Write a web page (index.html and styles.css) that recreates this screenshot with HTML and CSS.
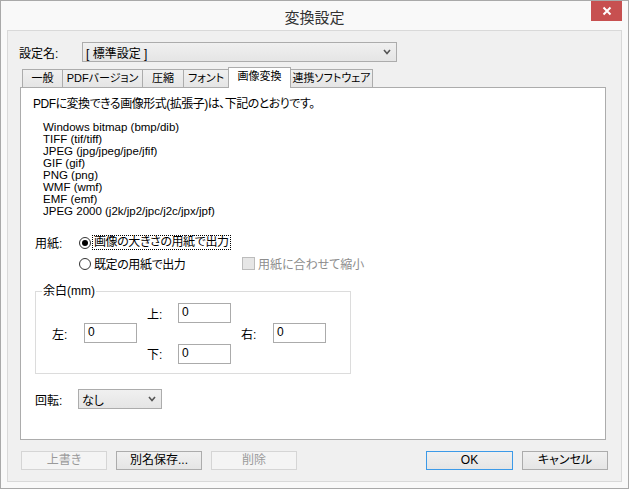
FILE: index.html
```html
<!DOCTYPE html>
<html lang="ja">
<head>
<meta charset="utf-8">
<title>変換設定</title>
<link rel="stylesheet" href="styles.css">
</head>
<body>
<div class="window">
  <div class="titlebar">
    <div></div>
    <div class="title">変換設定</div>
    <div class="tb-right">
      <div class="close"><svg width="10" height="10" viewBox="0 0 10 10"><path d="M1.5 1.5 L8.5 8.5 M8.5 1.5 L1.5 8.5" stroke="#fff" stroke-width="2" fill="none"/></svg></div>
    </div>
  </div>
  <div class="panel">
    <div class="name-row">
      <span class="name-lbl">設定名:</span>
      <div class="select select-wide">
        <span>[ 標準設定 ]</span>
        <svg class="chev" width="8" height="6" viewBox="0 0 8 6"><path d="M1 1 L4 4.5 L7 1" stroke="#555" stroke-width="1.6" fill="none"/></svg>
      </div>
    </div>
    <div class="tabs">
      <div class="tab">一般</div>
      <div class="tab">PDFバージョン</div>
      <div class="tab">圧縮</div>
      <div class="tab">フォント</div>
      <div class="tab active">画像変換</div>
      <div class="tab">連携ソフトウェア</div>
    </div>
    <div class="tabpanel">
      <p class="intro">PDFに変換できる画像形式(拡張子)は、下記のとおりです。</p>
      <ul class="formats">
        <li>Windows bitmap (bmp/dib)</li>
        <li>TIFF (tif/tiff)</li>
        <li>JPEG (jpg/jpeg/jpe/jfif)</li>
        <li>GIF (gif)</li>
        <li>PNG (png)</li>
        <li>WMF (wmf)</li>
        <li>EMF (emf)</li>
        <li>JPEG 2000 (j2k/jp2/jpc/j2c/jpx/jpf)</li>
      </ul>
      <div class="paper">
        <span class="paper-lbl">用紙:</span>
        <div class="opt g2"><span class="radio"><span class="dot"></span></span><span class="focus">画像の大きさの用紙で出力</span></div>
        <div class="opt g2 row2"><span class="radio"></span><span class="opt-text">既定の用紙で出力</span></div>
        <div class="opt g3 row2 disabled"><span class="check"></span><span>用紙に合わせて縮小</span></div>
      </div>
      <fieldset class="margins">
        <legend>余白(mm)</legend>
        <div class="mgrid">
          <span class="ml c3 r1">上:</span><div class="field c4 r1">0</div>
          <span class="ml c1 r2">左:</span><div class="field c2 r2">0</div>
          <span class="ml c5 r2">右:</span><div class="field c6 r2">0</div>
          <span class="ml c3 r3">下:</span><div class="field c4 r3">0</div>
        </div>
      </fieldset>
      <div class="rotate">
        <span class="rot-lbl">回転:</span>
        <div class="select select-small">
          <span>なし</span>
          <svg class="chev" width="8" height="6" viewBox="0 0 8 6"><path d="M1 1 L4 4.5 L7 1" stroke="#555" stroke-width="1.6" fill="none"/></svg>
        </div>
      </div>
    </div>
    <div class="buttons">
      <div class="btn disabled">上書き</div>
      <div class="btn">別名保存...</div>
      <div class="btn disabled">削除</div>
      <div class="spacer"></div>
      <div class="btn default">OK</div>
      <div class="btn">キャンセル</div>
    </div>
  </div>
</div>
</body>
</html>
```
FILE: styles.css
```css
* { box-sizing: border-box; }
html, body { margin: 0; padding: 0; }
body {
  font-family: "Liberation Sans", "Noto Sans CJK JP", sans-serif;
  font-size: 12px;
  font-feature-settings: "palt";
  color: #000;
  background: #fff;
}
.window {
  width: 629px;
  height: 489px;
  border: 1px solid #a9a9a9;
  background: #f9f9f9;
  padding: 0 6px 6px 6px;
  display: flex;
  flex-direction: column;
}
.titlebar {
  height: 29px;
  display: grid;
  grid-template-columns: 1fr auto 1fr;
}
.title {
  font-family: "Noto Sans CJK JP", sans-serif;
  font-size: 15px;
  line-height: 29px;
  color: #333;
  padding-top: 1px;
}
.tb-right { display: flex; justify-content: flex-end; align-items: flex-start; }
.close {
  width: 31px;
  height: 20px;
  background: #c75050;
  display: flex;
  align-items: center;
  justify-content: center;
}
.panel {
  height: 452px;
  border: 1px solid #d9d9d9;
  background: #f0f0f0;
}
.name-row {
  margin: 11px 0 0 11px;
  display: flex;
  align-items: center;
  height: 20px;
}
.name-lbl { width: 63px; }
.select {
  height: 20px;
  border: 1px solid #acacac;
  background: linear-gradient(#f0f0f0, #e5e5e5);
  display: flex;
  align-items: center;
  justify-content: space-between;
  padding: 0 5px 0 3px;
}
.select-wide { width: 315px; }
.select-small { width: 84px; }
.chev { display: block; }
.tabs {
  margin: 5px 0 0 14px;
  height: 20px;
  display: grid;
  grid-template-columns: 41px 80px 41px 45px 62px 82px;
  align-items: end;
  position: relative;
  z-index: 1;
  font-size: 11px;
}
.tab {
  height: 18px;
  border: 1px solid #acacac;
  border-left-width: 0;
  border-bottom: none;
  background: linear-gradient(#f0f0f0, #e5e5e5);
  text-align: center;
  line-height: 17px;
  white-space: nowrap;
  overflow: hidden;
}
.tab:first-child { border-left-width: 1px; }
.tab.active {
  height: 21px;
  margin-bottom: -1px;
  background: #fff;
  border-left-width: 1px;
  margin-left: -1px;
  line-height: 17px;
}
.tabpanel {
  margin-left: 12px;
  width: 586px;
  height: 353px;
  border: 1px solid #acacac;
  background: #fff;
  padding: 9px 0 0 12px;
}
.intro { margin: 0; line-height: 14px; letter-spacing: -0.5px; }
.formats {
  list-style: none;
  margin: 10px 0 0 10px;
  padding: 0;
  font-size: 11.5px;
  line-height: 12px;
}
.paper {
  margin: 15px 0 0 2px;
  display: grid;
  grid-template-columns: 44px 163px auto;
  grid-auto-rows: 21px;
  align-items: center;
}
.g2 { grid-column: 2; }
.g3 { grid-column: 3; }
.row2 { grid-row: 2; }
.opt { display: flex; align-items: center; gap: 1px; white-space: nowrap; }
.radio {
  width: 12px;
  height: 12px;
  border: 1px solid #333;
  border-radius: 50%;
  background: #fff;
  display: flex;
  align-items: center;
  justify-content: center;
}
.dot { width: 6px; height: 6px; border-radius: 50%; background: #000; }
.focus { border: 1px dotted #000; padding: 0 1px; line-height: 13px; letter-spacing: -0.4px; }
.opt-text { padding-left: 2px; letter-spacing: -0.4px; }
.check {
  width: 13px;
  height: 13px;
  border: 1px solid #bcbcbc;
  background: #e6e6e6;
  margin-right: 2px;
}
.disabled { color: #8d8d8d; }
.margins {
  margin: 11px 0 0 2px;
  width: 316px;
  border: 1px solid #dcdcdc;
  padding: 6px 6px 9px 6px;
}
.margins legend { padding: 0 1px; line-height: 12px; }
.mgrid {
  display: grid;
  grid-template-columns: 42px 53px 41px 53px 42px 53px;
  grid-template-rows: 20px 20px 21px;
  align-items: center;
}
.ml { padding-left: 10px; }
.field {
  height: 20px;
  border: 1px solid #ababab;
  background: #fff;
  padding: 0 3px;
  line-height: 16px;
  align-self: start;
}
.r3.field { align-self: end; }
.c1 { grid-column: 1; } .c2 { grid-column: 2; } .c3 { grid-column: 3; }
.c4 { grid-column: 4; } .c5 { grid-column: 5; } .c6 { grid-column: 6; }
.r1 { grid-row: 1; } .r2 { grid-row: 2; } .r3 { grid-row: 3; }
.rotate {
  margin: 15px 0 0 2px;
  display: flex;
  align-items: center;
}
.rot-lbl { width: 43px; }
.buttons {
  margin: 11px 0 0 13px;
  width: 587px;
  display: flex;
  gap: 9px;
}
.spacer { flex: 1; }
.btn {
  width: 86px;
  height: 19px;
  border: 1px solid #acacac;
  background: linear-gradient(#f0f0f0, #e5e5e5);
  text-align: center;
  line-height: 17px;
}
.btn.disabled { border-color: #d5d5d5; background: #f4f4f4; color: #9a9a9a; }
.btn.default { border-color: #3c9ae8; width: 87px; }
```
